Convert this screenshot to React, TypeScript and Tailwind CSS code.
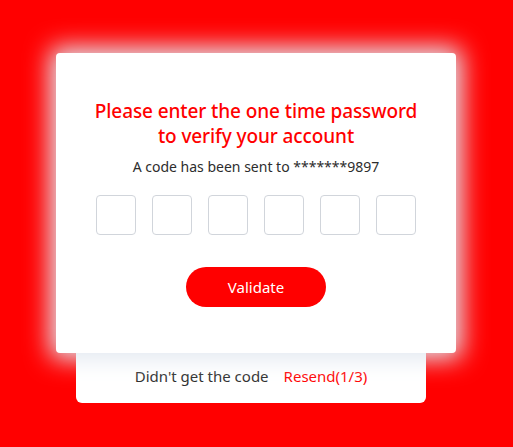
export default function App() {
  return (
    <div
      className="min-h-screen bg-[#ff0000] flex flex-col items-start pt-[53px] pl-[56px]"
      style={{ fontFamily: '"Noto Sans", "Open Sans", sans-serif' }}
    >
      <div className="relative z-10 w-[400px] h-[300px] bg-white rounded-[4px] shadow-[0_0_24px_6px_#e2e8f0] flex flex-col items-center pt-[46px]">
        <h1 className="text-[#ff0000] text-[19px] leading-[25px] font-medium text-center tracking-[-0.1px]">
          Please enter the one time password
          <br />
          to verify your account
        </h1>
        <p className="mt-[8px] text-[#2d2d2d] text-[14px] leading-[20px]">
          A code has been sent to *******9897
        </p>
        <div className="mt-[18px] flex gap-4">
          {[0, 1, 2, 3, 4, 5].map((i) => (
            <input
              key={i}
              maxLength={1}
              className="w-10 h-10 rounded-[4px] border border-[#d1d5db] text-center outline-none"
            />
          ))}
        </div>
        <button className="mt-8 w-[140px] h-10 rounded-full bg-[#ff0000] text-white text-[15px]">
          Validate
        </button>
      </div>
      <div className="ml-[20px] w-[350px] h-[50px] bg-white rounded-b-[6px] flex items-center justify-center gap-[15px] text-[15px] pb-[4px]">
        <span className="text-[#2d2d2d]">Didn't get the code</span>
        <span className="text-[#ff0000]">Resend(1/3)</span>
      </div>
    </div>
  );
}
